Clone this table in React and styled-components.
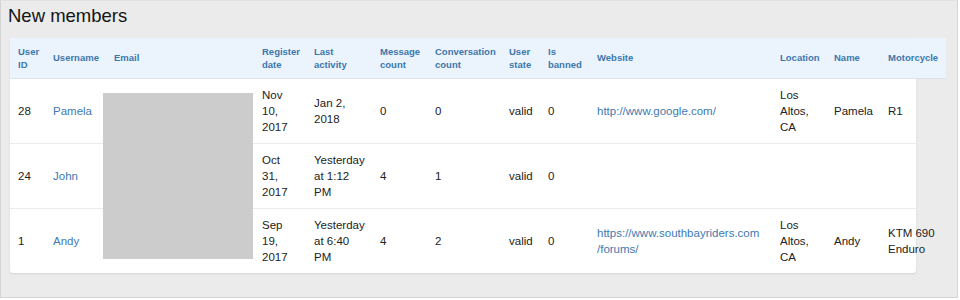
import styled, { createGlobalStyle } from 'styled-components';

const GlobalStyle = createGlobalStyle`
  body {
    margin: 0;
    font-family: "Liberation Sans", Arial, sans-serif;
  }
`;

const columns = [
  { key: 'id', label: 'User ID', width: 35 },
  { key: 'username', label: 'Username', width: 61 },
  { key: 'email', label: 'Email', width: 148 },
  { key: 'registered', label: 'Register date', width: 52 },
  { key: 'lastActivity', label: 'Last activity', width: 66 },
  { key: 'messages', label: 'Message count', width: 55 },
  { key: 'conversations', label: 'Conversation count', width: 74 },
  { key: 'state', label: 'User state', width: 39 },
  { key: 'banned', label: 'Is banned', width: 49 },
  { key: 'website', label: 'Website', width: 183 },
  { key: 'location', label: 'Location', width: 54 },
  { key: 'name', label: 'Name', width: 54 },
  { key: 'motorcycle', label: 'Motorcycle', width: 66 },
];

const members = [
  {
    id: 28, username: 'Pamela', registered: 'Nov 10, 2017', lastActivity: 'Jan 2, 2018',
    messages: 0, conversations: 0, state: 'valid', banned: 0,
    website: ['http://www.google.com/'], location: 'Los Altos, CA', name: 'Pamela', motorcycle: 'R1',
  },
  {
    id: 24, username: 'John', registered: 'Oct 31, 2017', lastActivity: 'Yesterday at 1:12 PM',
    messages: 4, conversations: 1, state: 'valid', banned: 0,
    website: null, location: '', name: '', motorcycle: '',
  },
  {
    id: 1, username: 'Andy', registered: 'Sep 19, 2017', lastActivity: 'Yesterday at 6:40 PM',
    messages: 4, conversations: 2, state: 'valid', banned: 0,
    website: ['https://www.southbayriders.com', '/forums/'], location: 'Los Altos, CA', name: 'Andy', motorcycle: 'KTM 690 Enduro',
  },
];

function App() {
  const renderCell = (member, key) => {
    if (key === 'username') return <Link href="#">{member.username}</Link>;
    if (key === 'email') return null;
    if (key === 'website') {
      if (!member.website) return null;
      return (
        <Link href="#">
          {member.website[0]}
          {member.website[1] && <wbr />}
          {member.website[1]}
        </Link>
      );
    }
    return member[key];
  };

  return (
    <Frame>
      <GlobalStyle />
      <Title>New members</Title>
      <Card>
        <Table>
          <colgroup>
            {columns.map((col) => (
              <col key={col.key} style={{ width: col.width }} />
            ))}
          </colgroup>
          <thead>
            <tr>
              {columns.map((col) => (
                <HeadCell key={col.key}>{col.label}</HeadCell>
              ))}
            </tr>
          </thead>
          <tbody>
            {members.map((member) => (
              <Row key={member.id}>
                {columns.map((col) => (
                  <Cell key={col.key}>{renderCell(member, col.key)}</Cell>
                ))}
              </Row>
            ))}
          </tbody>
        </Table>
        <Redacted />
      </Card>
    </Frame>
  );
}

const Frame = styled.div`
  box-sizing: border-box;
  width: 958px;
  height: 298px;
  border: 1px solid #d4d4d4;
  border-top-color: #e2e2e2;
  background: #ebebeb;
  padding: 4px 0 0 7px;
`;

const Title = styled.h1`
  margin: 0 0 11px;
  font-size: 18.5px;
  line-height: 22px;
  font-weight: normal;
  color: #141414;
`;

const Card = styled.div`
  position: relative;
  width: 906px;
  margin-left: 2px;
  background: #fff;
  border-radius: 3px;
  box-shadow: 0 1px 2px rgba(0, 0, 0, 0.1);
`;

const Table = styled.table`
  width: 936px;
  table-layout: fixed;
  border-collapse: collapse;
  border-spacing: 0;
`;

const HeadCell = styled.th`
  height: 40px;
  box-sizing: border-box;
  padding: 0 8px;
  text-align: left;
  vertical-align: middle;
  font-size: 9.5px;
  line-height: 13px;
  font-weight: bold;
  color: #3d77ad;
  background: #ebf4fc;
  border-bottom: 1px solid #d9e3ec;
  white-space: normal;
  &:first-child {
    border-top-left-radius: 3px;
  }
`;

const Row = styled.tr`
  height: 65px;
  & + & {
    border-top: 1px solid #ececec;
  }
`;

const Cell = styled.td`
  padding: 0 8px;
  vertical-align: middle;
  font-size: 11.5px;
  line-height: 16px;
  color: #222;
  white-space: normal;
`;

const Link = styled.a`
  color: #3f79b0;
  text-decoration: none;
`;

const Redacted = styled.div`
  position: absolute;
  left: 93px;
  top: 55px;
  width: 150px;
  height: 166px;
  background: #cccccc;
`;

export default App;
